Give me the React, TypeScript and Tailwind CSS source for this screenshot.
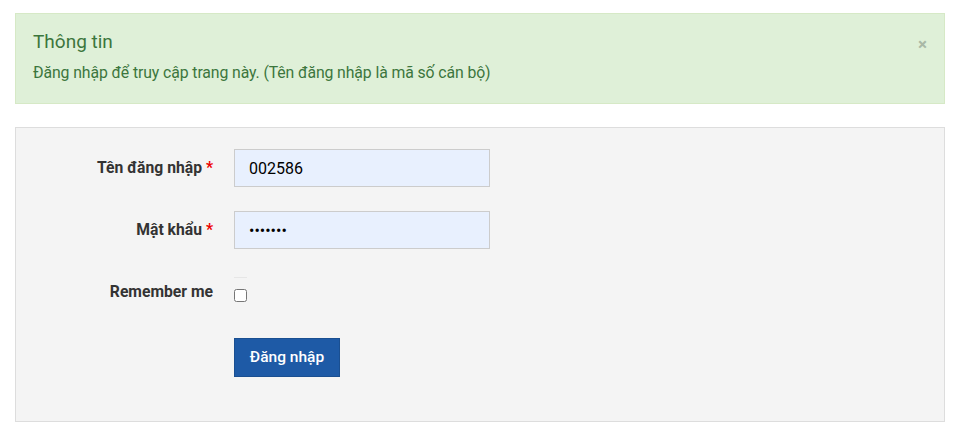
import React from "react";

export default function App() {
  return (
    <div className="w-[960px] h-[434px] bg-white" style={{ fontFamily: "Roboto, 'Noto Sans', sans-serif" }}>
      <div className="pt-[13px] px-[15px]">
        <div className="relative border border-[#d6e9c6] bg-[#dff0d8] text-[#3c763d] h-[91px] px-[17px] pt-[16px]">
          <div className="text-[19px] leading-[24px]">Thông tin</div>
          <div className="text-[15.8px] leading-[20px] mt-[9px] tracking-[-0.1px]">Đăng nhập để truy cập trang này. (Tên đăng nhập là mã số cán bộ)</div>
          <span className="absolute right-[17px] top-[22px] text-[#a9b8a6] text-[17px] font-bold leading-none">×</span>
        </div>
        <div className="mt-[23px] border border-[#dddddd] bg-[#f4f4f4] h-[295px] pt-[21px]">
          <div className="flex items-center h-[38px]">
            <label className="w-[197px] text-right text-[15.7px] font-bold text-[#333]">
              Tên đăng nhập <span className="text-[#e00]">*</span>
            </label>
            <input
              className="ml-[21px] w-[256px] h-[38px] border border-[#ccc] bg-[#e8f0fe] px-[14px] text-[16px] text-black outline-none"
              defaultValue="002586"
            />
          </div>
          <div className="flex items-center h-[38px] mt-[24px]">
            <label className="w-[197px] text-right text-[15.7px] font-bold text-[#333]">
              Mật khẩu <span className="text-[#e00]">*</span>
            </label>
            <input
              type="password"
              className="ml-[21px] w-[256px] h-[38px] border border-[#ccc] bg-[#e8f0fe] px-[14px] text-[16px] text-black outline-none"
              defaultValue="1234567"
            />
          </div>
          <div className="flex items-start mt-[30px]">
            <label className="w-[197px] text-right text-[15.7px] font-bold text-[#333] leading-[20px] pt-[3px]">Remember me</label>
            <div className="ml-[21px] flex flex-col">
              <div className="w-[13px] h-[1px] bg-[#e6e6e6] -mt-[2px] mb-[11px]" />
              <input type="checkbox" className="w-[13px] h-[13px] m-0" />
            </div>
          </div>
          <div className="mt-[36px] ml-[218px]">
            <button className="w-[106px] h-[39px] bg-[#1e5aa6] border border-[#1a4f91] text-white text-[15.5px] font-medium">
              Đăng nhập
            </button>
          </div>
        </div>
      </div>
    </div>
  );
}
